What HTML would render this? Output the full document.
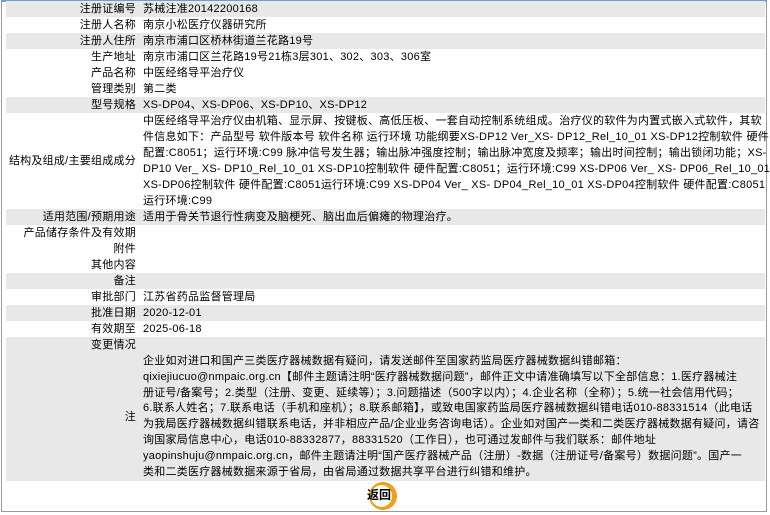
<!DOCTYPE html>
<html><head><meta charset="utf-8"><style>
html,body{margin:0;padding:0;background:#fff;}
body{width:770px;height:515px;position:relative;overflow:hidden;font-family:"Liberation Sans","Noto Sans CJK SC",sans-serif;font-size:11px;letter-spacing:0.25px;color:#000;}
.frame{position:absolute;left:1px;top:0;width:766px;height:512px;border:1px solid #999;border-top:2px solid #6a9fd4;box-sizing:border-box;}
.row{position:absolute;left:6px;width:759px;height:16px;}
.g{background:#e8e8e8;}
.l{position:absolute;right:629px;top:0;line-height:16px;white-space:nowrap;text-align:right;}
.v{position:absolute;left:137px;top:0;line-height:16px;white-space:nowrap;}
.btn{position:absolute;left:369px;top:482px;width:28px;height:28px;border-radius:50%;background:#f0a010;}
.btn i{position:absolute;left:2px;top:3px;width:21px;height:22px;border-radius:50%;background:#fff;}
.bt{position:absolute;left:367px;top:487px;font-weight:bold;font-size:12px;line-height:16px;letter-spacing:0;}
</style></head><body>
<div class="frame"></div>
<div class="row g" style="top:1px"><span class="l">注册证编号</span><span class="v">苏械注准20142200168</span></div>
<div class="row" style="top:17px"><span class="l">注册人名称</span><span class="v">南京小松医疗仪器研究所</span></div>
<div class="row g" style="top:33px"><span class="l">注册人住所</span><span class="v">南京市浦口区桥林街道兰花路19号</span></div>
<div class="row" style="top:49px"><span class="l">生产地址</span><span class="v">南京市浦口区兰花路19号21栋3层301、302、303、306室</span></div>
<div class="row" style="top:65px"><span class="l">产品名称</span><span class="v">中医经络导平治疗仪</span></div>
<div class="row" style="top:81px"><span class="l">管理类别</span><span class="v">第二类</span></div>
<div class="row g" style="top:97px"><span class="l">型号规格</span><span class="v">XS-DP04、XS-DP06、XS-DP10、XS-DP12</span></div>
<div class="row" style="top:113px;height:96px"><span class="l" style="top:40px">结构及组成/主要组成成分</span><span class="v">中医经络导平治疗仪由机箱、显示屏、按键板、高低压板、一套自动控制系统组成。治疗仪的软件为内置式嵌入式软件，其软<br>件信息如下：产品型号 软件版本号 软件名称 运行环境 功能纲要XS-DP12 Ver_XS- DP12_Rel_10_01 XS-DP12控制软件 硬件<br>配置:C8051；运行环境:C99 脉冲信号发生器；输出脉冲强度控制；输出脉冲宽度及频率；输出时间控制；输出锁闭功能；XS-<br>DP10 Ver_ XS- DP10_Rel_10_01 XS-DP10控制软件 硬件配置:C8051；运行环境:C99 XS-DP06 Ver_ XS- DP06_Rel_10_01<br>XS-DP06控制软件 硬件配置:C8051运行环境:C99 XS-DP04 Ver_ XS- DP04_Rel_10_01 XS-DP04控制软件 硬件配置:C8051<br>运行环境:C99</span></div>
<div class="row g" style="top:209px"><span class="l">适用范围/预期用途</span><span class="v">适用于骨关节退行性病变及脑梗死、脑出血后偏瘫的物理治疗。</span></div>
<div class="row" style="top:225px"><span class="l">产品储存条件及有效期</span></div>
<div class="row" style="top:241px"><span class="l">附件</span></div>
<div class="row" style="top:257px"><span class="l">其他内容</span></div>
<div class="row g" style="top:273px"><span class="l">备注</span></div>
<div class="row" style="top:289px"><span class="l">审批部门</span><span class="v">江苏省药品监督管理局</span></div>
<div class="row g" style="top:305px"><span class="l">批准日期</span><span class="v">2020-12-01</span></div>
<div class="row" style="top:321px"><span class="l">有效期至</span><span class="v">2025-06-18</span></div>
<div class="row g" style="top:337px;height:144px"><span class="l">变更情况</span><span class="l" style="top:72px">注</span><span class="v" style="top:17px;line-height:15.8px">企业如对进口和国产三类医疗器械数据有疑问，请发送邮件至国家药监局医疗器械数据纠错邮箱：<br>qixiejiucuo@nmpaic.org.cn【邮件主题请注明“医疗器械数据问题”，邮件正文中请准确填写以下全部信息：1.医疗器械注<br>册证号/备案号；2.类型（注册、变更、延续等）；3.问题描述（500字以内）；4.企业名称（全称）；5.统一社会信用代码；<br>6.联系人姓名；7.联系电话（手机和座机）；8.联系邮箱】，或致电国家药监局医疗器械数据纠错电话010-88331514（此电话<br>为我局医疗器械数据纠错联系电话，并非相应产品/企业业务咨询电话）。企业如对国产一类和二类医疗器械数据有疑问，请咨<br>询国家局信息中心，电话010-88332877，88331520（工作日），也可通过发邮件与我们联系：邮件地址<br>yaopinshuju@nmpaic.org.cn，邮件主题请注明“国产医疗器械产品（注册）-数据（注册证号/备案号）数据问题”。国产一<br>类和二类医疗器械数据来源于省局，由省局通过数据共享平台进行纠错和维护。</span></div>
<div class="btn"><i></i></div>
<div class="bt">返回</div>
</body></html>
